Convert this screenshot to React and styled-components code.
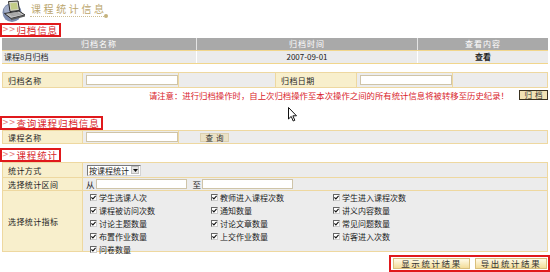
import React from 'react'
import styled, {createGlobalStyle} from 'styled-components'

const GlobalStyle = createGlobalStyle`
    html, body {
        margin: 0;
        padding: 0;
        background: #fff;
    }

    body {
        font-family: "Noto Sans CJK SC", "Liberation Sans", sans-serif;
        font-size: 8px;
        color: #222;
    }
`

const TAN = '#eed8a0'
const LABEL_BG = '#f8efcc'
const VALUE_BG = '#ececec'
const RED = '#e0191c'

const Page = styled.div`
    position: relative;
    width: 550px;
    height: 272px;
    overflow: hidden;
`

const TitleBar = styled.div`
    display: flex;
    align-items: flex-start;
    height: 23px;
    padding-left: 2px;
`

const TitleBlock = styled.div`
    display: flex;
    flex-direction: column;
    margin-left: 4px;
    padding-top: 3px;
`

const TitleText = styled.span`
    font-size: 10px;
    line-height: 11px;
    letter-spacing: 2.6px;
    color: #bba66d;
    padding-left: 1px;
`

const TitleRule = styled.div`
    position: relative;
    width: 74px;
    margin-top: 2px;
    border-top: 1px dotted #cdbf94;

    &::after {
        content: '';
        position: absolute;
        right: -4px;
        top: -3px;
        width: 4px;
        height: 4px;
        border-radius: 50%;
        background: #c4b27c;
    }
`

const SectionHead = styled.div`
    display: inline-flex;
    align-items: center;
    height: 10px;
    margin-top: ${({top}) => top || 0}px;
    border: 2px solid ${RED};
    padding-right: 1px;
    font-size: 9.5px;
    line-height: 10px;
    letter-spacing: 0.9px;
    color: #d8262b;
`

const Arrows = styled.span`
    color: #e57a7a;
    letter-spacing: 0;
    margin-right: 1px;
    font-family: "DejaVu Sans", sans-serif;
    font-size: 8px;
`

const ArchiveList = styled.div`
    margin: 1px 2px 0;
`

const ListRow = styled.div`
    display: grid;
    grid-template-columns: 194px 220px 1fr;
    column-gap: 1px;
    background: ${({head}) => head ? '#e4e4e4' : '#fff'};
    border-bottom: 1px solid #f1d68c;
`

const ListCell = styled.div`
    height: 12px;
    line-height: 12px;
    padding-left: ${({left}) => left ? 2 : 0}px;
    text-align: ${({left}) => left ? 'left' : 'center'};
    background: ${({head}) => head ? '#a9a9a9' : '#ebebeb'};
    color: ${({head}) => head ? '#fff' : '#222'};
    letter-spacing: ${({head}) => head ? 1 : 0}px;
    font-weight: ${({bold}) => bold ? 700 : 400};
`

const FormGrid = styled.div`
    display: grid;
    grid-template-columns: ${({cols}) => cols};
    gap: 1px;
    margin: ${({top}) => top || 0}px 2px 0;
    border: 1px solid ${TAN};
    background: ${TAN};
`

const Label = styled.div`
    display: flex;
    align-items: center;
    height: ${({h}) => h || 14}px;
    padding-left: 5px;
    background: ${LABEL_BG};
    letter-spacing: 0.4px;
`

const Value = styled.div`
    display: flex;
    align-items: center;
    height: ${({h}) => h || 14}px;
    padding-left: ${({pad}) => pad || 0}px;
    background: ${VALUE_BG};
`

const TextInput = styled.div`
    box-sizing: border-box;
    width: ${({w}) => w || 92}px;
    height: 10px;
    border: 1px solid #cfc4a8;
    background: #fff;
`

const NoticeRow = styled.div`
    display: flex;
    justify-content: flex-end;
    align-items: center;
    gap: 10px;
    height: 14px;
    padding-right: 2px;
`

const Notice = styled.span`
    font-size: 8.4px;
    color: #d9232a;
`

const SmallButton = styled.div`
    box-sizing: border-box;
    width: 29px;
    height: ${({dark}) => dark ? 10 : 9}px;
    line-height: ${({dark}) => dark ? 8 : 7}px;
    text-align: center;
    white-space: nowrap;
    font-size: 7.5px;
    letter-spacing: 3px;
    text-indent: 3px;
    border: 1px solid ${({dark}) => dark ? '#3a3220' : '#dcd0b0'};
    background: ${({dark}) => dark ? '#f1e2b4' : '#ebe2c6'};
    color: #333;
`

const SelectBox = styled.div`
    box-sizing: border-box;
    display: flex;
    align-items: center;
    width: 54px;
    height: 11px;
    border: 1px solid #7a7a7a;
    border-right-color: #d4d4d4;
    border-bottom-color: #d4d4d4;
    background: #fff;
    padding-left: 1px;
`

const SelectText = styled.span`
    flex: 1;
    font-size: 8px;
    line-height: 9px;
    white-space: nowrap;
`

const SelectArrow = styled.span`
    display: flex;
    align-items: center;
    justify-content: center;
    width: 8px;
    height: 8px;
    margin-right: 1px;
    background: #e4e4e4;
    border: 1px solid #bdbdbd;
    box-sizing: border-box;
`

const RangeWord = styled.span`
    margin-left: ${({gap}) => gap || 0}px;
    margin-right: 1px;
    font-size: 8.5px;
`

const ChecksGrid = styled.div`
    display: grid;
    grid-template-columns: 121px 122px 1fr;
    grid-auto-rows: 13px;
    align-content: start;
    padding: 0 0 0 7px;
    height: 60px;
    box-sizing: border-box;
    background: ${VALUE_BG};
`

const CheckItem = styled.label`
    display: flex;
    align-items: center;
    gap: 2px;
    white-space: nowrap;
`

const Box = styled.span`
    box-sizing: border-box;
    display: flex;
    align-items: center;
    justify-content: center;
    width: 7px;
    height: 7px;
    border: 1px solid #666;
    border-right-color: #ccc;
    border-bottom-color: #ccc;
    background: #fff;
`

const ActionRow = styled.div`
    display: flex;
    justify-content: flex-end;
    margin-top: 3px;
`

const ActionFrame = styled.div`
    display: flex;
    align-items: center;
    gap: 5px;
    height: 13px;
    padding: 0 1px 0 2px;
    border: 2px solid ${RED};
`

const ActionButton = styled.div`
    box-sizing: border-box;
    width: ${({w}) => w}px;
    height: 11px;
    line-height: 9px;
    text-align: center;
    white-space: nowrap;
    font-size: 8.5px;
    letter-spacing: 1.6px;
    color: #333;
    border: 1px solid #d9bf7c;
    background: linear-gradient(#fffbe8, #f3dc98);
`

const Cursor = styled.svg`
    position: absolute;
    left: 288px;
    top: 107px;
`

const Logo = () => (
    <svg width="24" height="22" viewBox="0 0 24 22">
        <circle cx="10" cy="12.5" r="9.5" fill="#7d8bad" />
        <ellipse cx="8" cy="10" rx="6" ry="5" fill="#b3bdd3" opacity="0.7" />
        <path d="M6.5 1.5 L16 1 L17.5 10.5 L8 11.5 Z" fill="#d8d8c8" stroke="#2b2b2b" strokeWidth="1" />
        <path d="M8.3 3.2 L14.8 2.8 L15.8 9 L9.3 9.7 Z" fill="#c2cc86" />
        <path d="M2.5 13.5 L17 11 L23 15 L9 18.5 Z" fill="#c4c4c4" stroke="#2b2b2b" strokeWidth="1" />
        <path d="M9 18.5 L23 15 L23 16.6 L9 20.2 Z" fill="#5c5c5c" />
        <path d="M6 14 L16 12.3 M7.5 15 L17.5 13.2 M9 16 L19 14.2" stroke="#8a8a8a" strokeWidth="0.6" />
    </svg>
)

const Check = () => (
    <svg width="5" height="5" viewBox="0 0 5 5">
        <path d="M0.4 2.3 L1.9 3.9 L4.6 0.8" fill="none" stroke="#111" strokeWidth="1.1" />
    </svg>
)

const metrics = [
    '学生选课人次', '教师进入课程次数', '学生进入课程次数',
    '课程被访问次数', '通知数量', '讲义内容数量',
    '讨论主题数量', '讨论文章数量', '常见问题数量',
    '布置作业数量', '上交作业数量', '访客进入次数',
    '问卷数量',
]

export default function App() {
    return (
        <Page>
            <GlobalStyle />
            <TitleBar>
                <Logo />
                <TitleBlock>
                    <TitleText>课程统计信息</TitleText>
                    <TitleRule />
                </TitleBlock>
            </TitleBar>

            <SectionHead><Arrows>&gt;&gt;</Arrows>归档信息</SectionHead>
            <ArchiveList>
                <ListRow head>
                    <ListCell head>归档名称</ListCell>
                    <ListCell head>归档时间</ListCell>
                    <ListCell head>查看内容</ListCell>
                </ListRow>
                <ListRow>
                    <ListCell left>课程8月归档</ListCell>
                    <ListCell>2007-09-01</ListCell>
                    <ListCell bold>查看</ListCell>
                </ListRow>
            </ArchiveList>

            <FormGrid top={8} cols="79px 95px 96px 80px 95px 1fr">
                <Label>归档名称</Label>
                <Value pad={3}><TextInput /></Value>
                <Value />
                <Label>归档日期</Label>
                <Value pad={3}><TextInput /></Value>
                <Value />
            </FormGrid>
            <NoticeRow>
                <Notice>请注意：进行归档操作时，自上次归档操作至本次操作之间的所有统计信息将被转移至历史纪录！</Notice>
                <SmallButton dark>归档</SmallButton>
            </NoticeRow>

            <SectionHead top={14}><Arrows>&gt;&gt;</Arrows>查询课程归档信息</SectionHead>
            <FormGrid cols="79px 95px 1fr">
                <Label h={12}>课程名称</Label>
                <Value h={12} pad={3}><TextInput /></Value>
                <Value h={12} pad={21}><SmallButton>查询</SmallButton></Value>
            </FormGrid>

            <SectionHead top={4}><Arrows>&gt;&gt;</Arrows>课程统计</SectionHead>
            <FormGrid cols="79px 1fr">
                <Label>统计方式</Label>
                <Value pad={4}>
                    <SelectBox>
                        <SelectText>按课程统计</SelectText>
                        <SelectArrow>
                            <svg width="5" height="3" viewBox="0 0 5 3"><path d="M0 0 H5 L2.5 3 Z" fill="#111" /></svg>
                        </SelectArrow>
                    </SelectBox>
                </Value>
                <Label h={12}>选择统计区间</Label>
                <Value h={12} pad={3}>
                    <RangeWord>从</RangeWord>
                    <TextInput w={91} />
                    <RangeWord gap={6}>至</RangeWord>
                    <TextInput w={91} />
                </Value>
                <Label h={60}>选择统计指标</Label>
                <ChecksGrid>
                    {metrics.map(m => (
                        <CheckItem key={m}>
                            <Box><Check /></Box>
                            {m}
                        </CheckItem>
                    ))}
                </ChecksGrid>
            </FormGrid>

            <ActionRow>
                <ActionFrame>
                    <ActionButton w={77}>显示统计结果</ActionButton>
                    <ActionButton w={72}>导出统计结果</ActionButton>
                </ActionFrame>
            </ActionRow>

            <Cursor width="9" height="15" viewBox="0 0 9 15">
                <path d="M0.5 0.5 V12 L3.2 9.4 L5.2 14 L6.8 13.3 L4.9 8.8 H8.5 Z" fill="#fff" stroke="#111" strokeWidth="1" />
            </Cursor>
        </Page>
    )
}
